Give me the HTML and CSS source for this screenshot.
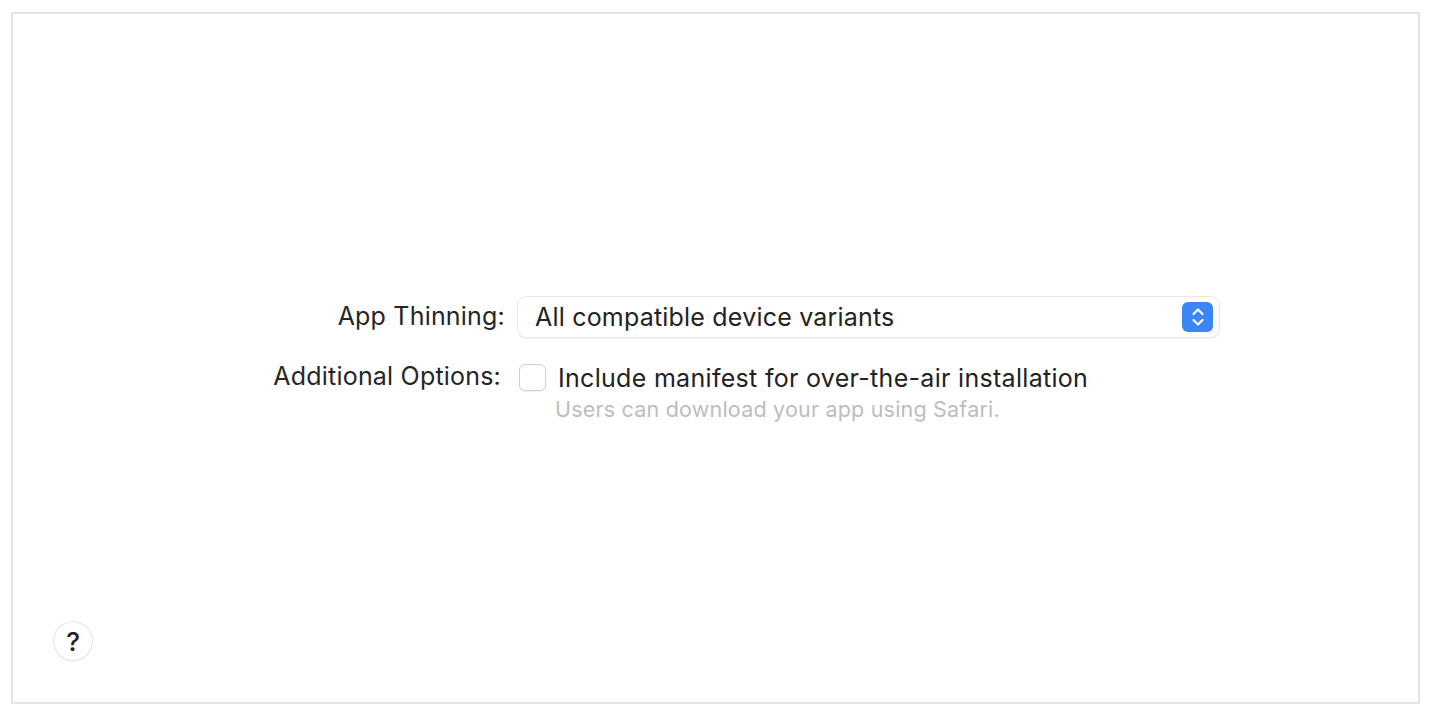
FILE: index.html
```html
<!DOCTYPE html>
<html>
<head>
<meta charset="utf-8">
<link rel="stylesheet" href="styles.css">
</head>
<body>
<div class="frame">
  <div class="form">
    <div class="label label-popup">App Thinning:</div>
    <div class="popup">
      <span class="popup-text">All compatible device variants</span>
      <span class="stepper">
        <svg width="16" height="22" viewBox="0 0 16 22"><path d="M3.5 8 L8 3.5 L12.5 8 M3.5 14 L8 18.5 L12.5 14" fill="none" stroke="#fff" stroke-width="2.2" stroke-linecap="round" stroke-linejoin="round"/></svg>
      </span>
    </div>
    <div class="label label-check">Additional Options:</div>
    <div class="option">
      <div class="check-row">
        <span class="checkbox"></span>
        <span class="check-text">Include manifest for over-the-air installation</span>
      </div>
      <div class="hint">Users can download your app using Safari.</div>
    </div>
  </div>
  <div class="footer">
    <button class="help">?</button>
  </div>
</div>
</body>
</html>
```
FILE: styles.css
```css
html, body {
  margin: 0;
  padding: 0;
  background: #ffffff;
}
body {
  font-family: Inter, "Noto Sans", sans-serif;
  color: #262626;
}
.frame {
  margin: 12px 18px 18px 11px;
  height: 688px;
  border: 2px solid #e4e4e4;
  display: flex;
  flex-direction: column;
}
.form {
  margin-top: 283px;
  padding-left: 242px;
  display: grid;
  grid-template-columns: 250px 701px;
  column-gap: 13px;
  row-gap: 25px;
  align-items: start;
}
.label {
  text-align: right;
  font-size: 25px;
  letter-spacing: 0.2px;
  line-height: 28px;
}
.label-popup {
  padding-top: 5px;
}
.label-check {
  padding-top: 0px;
  margin-right: 4px;
}
.popup {
  height: 40px;
  box-sizing: border-box;
  border-radius: 8px;
  background: #fff;
  box-shadow: 0 0 0 1px #e8e8e8, 0 1px 2px rgba(0,0,0,0.14);
  display: flex;
  align-items: center;
  justify-content: space-between;
  padding: 0 6px 0 17px;
}
.popup-text {
  font-size: 25px;
  letter-spacing: 0.2px;
  color: #222;
}
.stepper {
  width: 31px;
  height: 30px;
  border-radius: 6px;
  background: #3a86f7;
  display: flex;
  align-items: center;
  justify-content: center;
}
.stepper svg { display: block; }
.check-row {
  display: flex;
  align-items: center;
  gap: 12px;
}
.checkbox {
  width: 27px;
  height: 27px;
  box-sizing: border-box;
  border: 1px solid #cfcfcf;
  border-radius: 6px;
  background: #fff;
  box-shadow: 0 1px 1px rgba(0,0,0,0.06);
  margin-left: 1px;
}
.check-text {
  font-size: 25px;
  letter-spacing: 0.3px;
  line-height: 28px;
  color: #222;
  padding-top: 2px;
}
.hint {
  margin-top: 4px;
  padding-left: 37px;
  font-size: 21.5px;
  letter-spacing: 0.2px;
  color: #bdbdbd;
}
.footer {
  margin-top: auto;
  padding: 0 0 42px 41px;
}
.help {
  width: 38px;
  height: 38px;
  border-radius: 50%;
  border: none;
  background: #fff;
  box-shadow: 0 0 0 1px #e6e6e6, 0 1px 2px rgba(0,0,0,0.15);
  font-family: Inter, "Noto Sans", sans-serif;
  font-size: 26px;
  font-weight: 500;
  color: #222;
  padding: 0;
  display: flex;
  align-items: center;
  justify-content: center;
}
```
